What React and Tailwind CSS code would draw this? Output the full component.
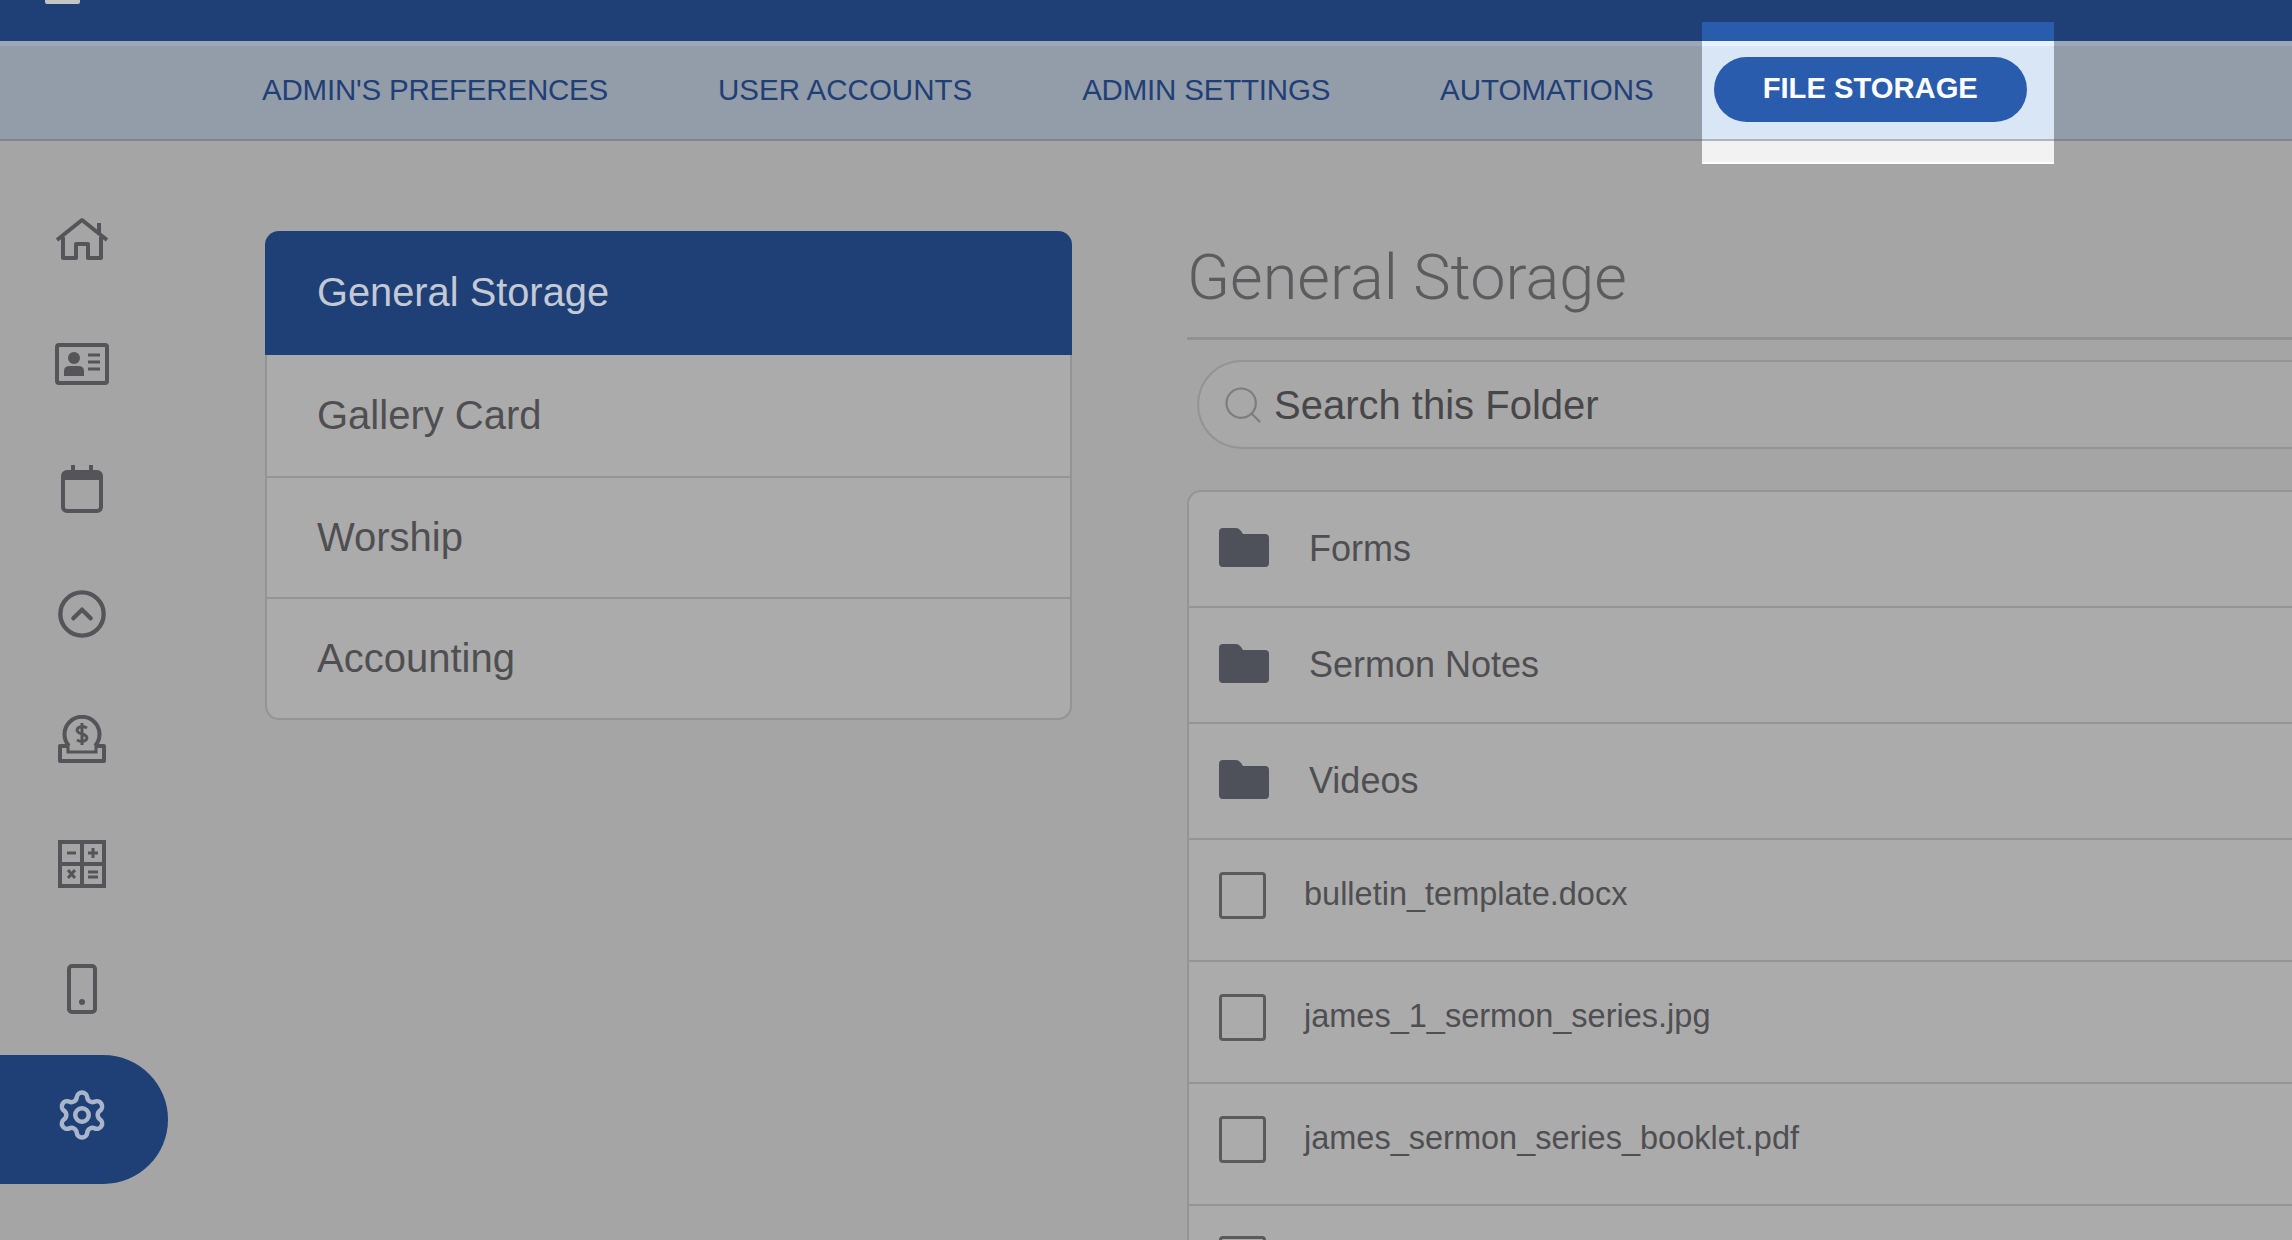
import { CircleChevronUp, Search, Settings } from 'lucide-react';

const font = "font-['Liberation_Sans',Arial,sans-serif]";

function HomeIcon() {
  return (
    <svg width="54" height="44" viewBox="0 0 54 44" fill="none" stroke="#555559" strokeWidth="4" strokeLinejoin="round">
      <path d="M2 23 L27 3 L52 23" />
      <path d="M44 16 V6" />
      <path d="M8 20 V41 H21 V27 H33 V41 H46 V20" />
    </svg>
  );
}

function IdCardIcon() {
  return (
    <svg width="54" height="42" viewBox="0 0 54 42">
      <rect x="2" y="2" width="50" height="38" rx="2" fill="none" stroke="#555559" strokeWidth="4" />
      <circle cx="19" cy="15" r="6" fill="#555559" />
      <path d="M9 33 V28 Q9 23 15 23 H23 Q29 23 29 28 V33 Z" fill="#555559" />
      <path d="M33 12 H45 M33 19 H45 M33 26 H45" stroke="#555559" strokeWidth="3" />
    </svg>
  );
}

function CalendarIcon() {
  return (
    <svg width="42" height="48" viewBox="0 0 42 48" fill="none">
      <rect x="2" y="7" width="38" height="39" rx="4" stroke="#555559" strokeWidth="4" />
      <path d="M2 11 Q2 6 6 6 H36 Q40 6 40 11 V15 H2 Z" fill="#555559" />
      <path d="M12 0 V8 M30 0 V8" stroke="#555559" strokeWidth="4" />
    </svg>
  );
}

function CoinIcon() {
  return (
    <svg width="48" height="48" viewBox="0 0 48 48" fill="none" stroke="#555559" strokeWidth="4">
      <path d="M11 31 A17.5 17.5 0 1 1 37 31" />
      <path d="M29 13 Q24 10 20 13 Q17 17 24 19 Q31 21 28 25 Q24 28 19 25 M24 8 V30" strokeWidth="3" />
      <path d="M10 31 H2 V46 H46 V31 H38" strokeLinejoin="round" />
      <path d="M10 31 V37 H38 V31" strokeWidth="3" />
    </svg>
  );
}

function CalcIcon() {
  return (
    <svg width="48" height="48" viewBox="0 0 48 48" fill="none" stroke="#555559">
      <rect x="2" y="2" width="44" height="44" strokeWidth="4" />
      <path d="M24 2 V46 M2 24 H46" strokeWidth="4" />
      <path d="M9 13 H18 M30 13 H40 M35 8 V18 M30 32 H40 M30 37 H40 M10 30 L17 38 M17 30 L10 38" strokeWidth="3" />
    </svg>
  );
}

function PhoneIcon() {
  return (
    <svg width="30" height="50" viewBox="0 0 30 50" fill="none">
      <rect x="2" y="2" width="26" height="46" rx="3" stroke="#555559" strokeWidth="4" />
      <circle cx="15" cy="38" r="3" fill="#555559" />
    </svg>
  );
}

function FolderIcon() {
  return (
    <svg width="50" height="39" viewBox="0 0 50 39" className="mb-[3px] shrink-0">
      <path d="M0 4 Q0 0 4 0 H17 Q20 0 22 3 L24 6 H46 Q50 6 50 10 V35 Q50 39 46 39 H4 Q0 39 0 35 Z" fill="#4e5159" />
    </svg>
  );
}

function NavLink({ children, className }) {
  return <a className={`mb-[5px] text-[29.5px] text-[#1f3f77] whitespace-nowrap ${className}`}>{children}</a>;
}

function SideItem({ children }) {
  return <div className="h-[125px] w-[164px] flex items-center justify-center">{children}</div>;
}

export default function App() {
  const folders = ['Forms', 'Sermon Notes', 'Videos'];
  const files = ['bulletin_template.docx', 'james_1_sermon_series.jpg', 'james_sermon_series_booklet.pdf'];
  const groups = ['Gallery Card', 'Worship', 'Accounting'];

  return (
    <div className={`relative h-[1240px] w-[2292px] overflow-hidden bg-[#a5a5a5] ${font}`}>
      <header className="h-[41px] bg-[#1f3f77] pl-[45px]">
        <div className="h-[4px] w-[35px] rounded-b-[2px] bg-[#c4c4c4]" />
      </header>

      <nav className="relative flex h-[100px] items-center border-t-[5px] border-b-2 border-t-[#9ba8ba] border-b-[#7f858e] bg-[#939ca9] pl-[262px]">
        <NavLink className="mr-[110px] tracking-[-0.2px]">ADMIN'S PREFERENCES</NavLink>
        <NavLink className="mr-[110px]">USER ACCOUNTS</NavLink>
        <NavLink className="mr-[110px] tracking-[-0.2px]">ADMIN SETTINGS</NavLink>
        <NavLink className="mr-[60px]">AUTOMATIONS</NavLink>
        <a className="relative z-20 mb-[7px] flex h-[65px] w-[313px] items-center justify-center rounded-full bg-[#2a5cad] text-[29.2px] font-bold text-white">
          FILE STORAGE
        </a>
      </nav>

      {/* spotlight behind the active tab */}
      <div className="absolute left-[1702px] top-[22px] z-10 flex h-[142px] w-[352px] flex-col">
        <div className="h-[19px] bg-[#2a5cad]" />
        <div className="h-[5px] bg-[#e6f2fd]" />
        <div className="h-[93px] bg-[#d8e6f6]" />
        <div className="h-[2px] bg-[#b0b6bd]" />
        <div className="flex-1 border-b-2 border-white bg-[#f2f2f2]" />
      </div>

      <div className="flex">
        <aside className="w-[265px] shrink-0 pt-[35px]">
          <SideItem><HomeIcon /></SideItem>
          <SideItem><IdCardIcon /></SideItem>
          <SideItem><CalendarIcon /></SideItem>
          <SideItem><CircleChevronUp size={52} strokeWidth={2} color="#555559" /></SideItem>
          <SideItem><CoinIcon /></SideItem>
          <SideItem><CalcIcon /></SideItem>
          <SideItem><PhoneIcon /></SideItem>
          <div className="mt-[4px] flex h-[129px] w-[168px] items-center justify-center rounded-r-full bg-[#1f3f77] pb-[9px] pr-[4px]">
            <Settings size={54} strokeWidth={2} color="#a9b6ca" />
          </div>
        </aside>

        <section className="w-[807px] shrink-0 pt-[90px]">
          <div className="flex h-[124px] items-center rounded-t-[14px] bg-[#1f3f77] pb-[1px] pl-[52px] text-[39.8px] text-[#c3cad5]">
            General Storage
          </div>
          <div className="overflow-hidden rounded-b-[14px] border-x-2 border-b-2 border-[#949494] bg-[#ababab]">
            {groups.map((g, i) => (
              <div key={g} className={`flex h-[121px] items-center pb-[2px] pl-[50px] text-[40px] text-[#4f4f52] ${i > 0 ? 'border-t-2 border-[#949494]' : ''}`}>
                {g}
              </div>
            ))}
          </div>
        </section>

        <main className="ml-[115px] flex-1 pt-[90px] min-w-0">
          <h1 className="h-[109px] border-b-[3px] border-[#919191] pt-[12px] text-[63px] leading-[70px] font-['Roboto',sans-serif] font-light text-[#5c5c5e]">
            General Storage
          </h1>
          <div className="ml-[10px] mt-[20px] flex h-[89px] items-center rounded-l-full border-y-2 border-l-2 border-[#949494] bg-[#a8a8a8] pl-[22px]">
            <Search size={44} strokeWidth={1.2} color="#7d7d7d" />
            <span className="ml-[9px] text-[40px] text-[#47474a]">Search this Folder</span>
          </div>
          <div className="mt-[41px] rounded-tl-[14px] border-t-2 border-l-2 border-[#949494] bg-[#ababab]">
            {folders.map((f) => (
              <div key={f} className="flex h-[116px] items-center border-b-2 border-[#949494] pl-[30px]">
                <FolderIcon />
                <span className="ml-[40px] text-[36px] text-[#4f4f52]">{f}</span>
              </div>
            ))}
            {files.map((f) => (
              <div key={f} className="flex h-[122px] items-center border-b-2 border-[#949494] pb-[9px] pl-[30px]">
                <div className="h-[47px] w-[47px] shrink-0 rounded-[4px] border-[3px] border-[#5b5b5e]" />
                <span className="mb-[2px] ml-[38px] text-[32.5px] text-[#4f4f52]">{f}</span>
              </div>
            ))}
            <div className="flex h-[122px] pt-[30px] pl-[30px]">
              <div className="h-[47px] w-[47px] shrink-0 rounded-[4px] border-[3px] border-[#5b5b5e]" />
            </div>
          </div>
        </main>
      </div>
    </div>
  );
}
